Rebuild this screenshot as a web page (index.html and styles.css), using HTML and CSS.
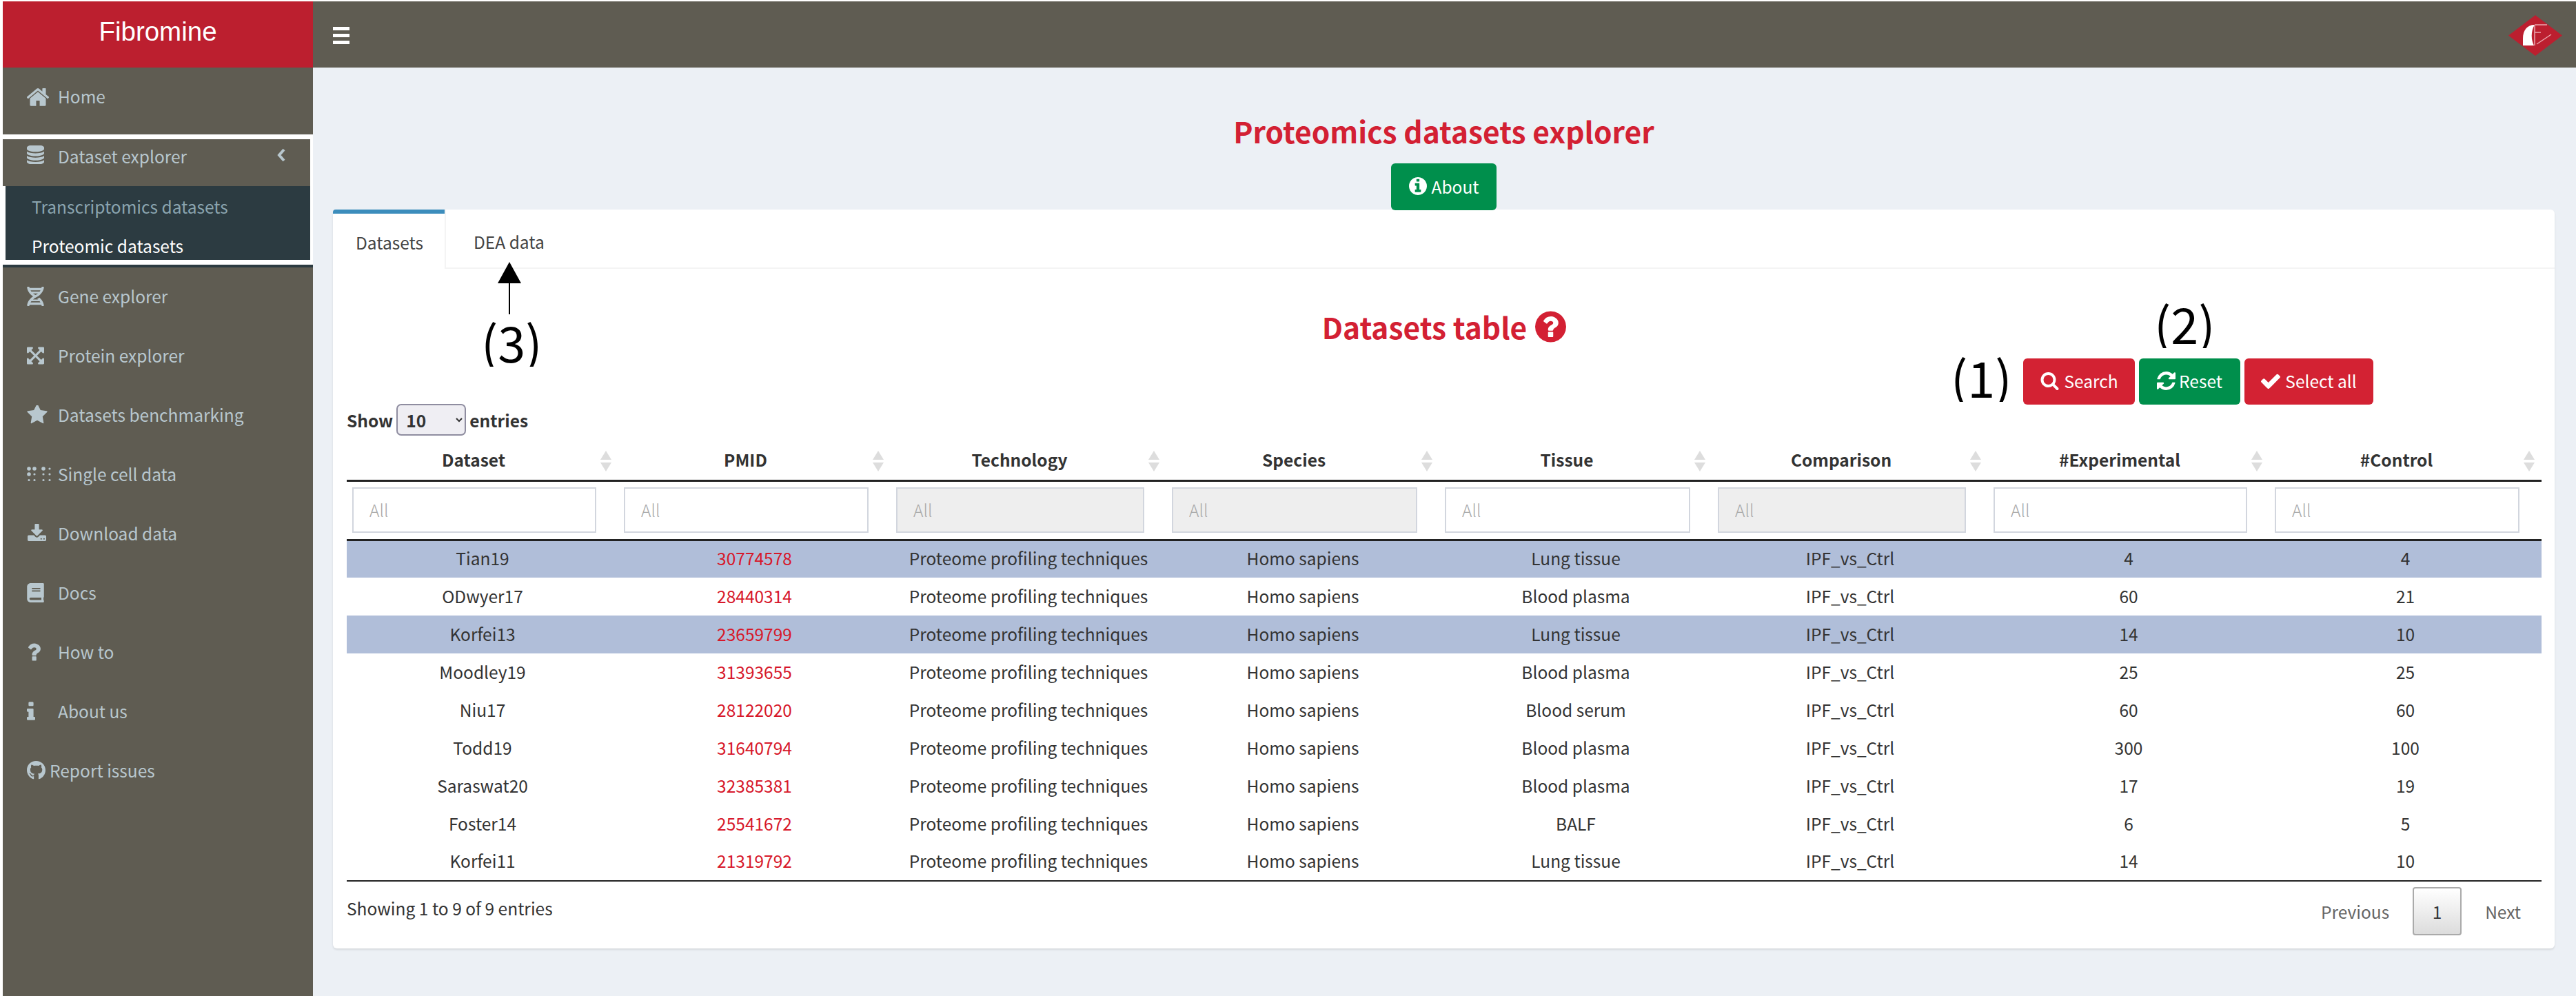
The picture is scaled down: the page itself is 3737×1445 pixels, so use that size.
FILE: index.html
```html
<!DOCTYPE html>
<html lang="en">
<head>
<meta charset="utf-8">
<title>Fibromine</title>
<link rel="stylesheet" href="styles.css">
</head>
<body>
<svg class="sprite" xmlns="http://www.w3.org/2000/svg">
<symbol id="i-home" viewBox="100 150 1592 1400"><path d="M1472 992v480q0 26-19 45t-45 19h-384v-384h-256v384h-384q-26 0-45-19t-19-45v-480q0-1 .5-3t.5-3l575-474 575 474q1 2 1 6zm223-69l-62 74q-8 9-21 11h-3q-13 0-21-7l-692-577-692 577q-12 8-24 7-13-2-21-11l-62-74q-8-10-7-23.500t11-21.500l719-599q32-26 76-26t76 26l244 204v-195q0-14 9-23t23-9h192q14 0 23 9t9 23v408l219 182q10 8 11 21.500t-7 23.500z"/></symbol>
<symbol id="i-db" viewBox="128 128 1536 1536"><path d="M896 768q237 0 443-43t325-127v170q0 69-103 128t-280 93.500-385 34.500-385-34.500-280-93.500-103-128v-170q119 84 325 127t443 43zm0 768q237 0 443-43t325-127v170q0 69-103 128t-280 93.500-385 34.500-385-34.500-280-93.500-103-128v-170q119 84 325 127t443 43zm0-384q237 0 443-43t325-127v170q0 69-103 128t-280 93.500-385 34.500-385-34.500-280-93.500-103-128v-170q119 84 325 127t443 43zm0-1152q208 0 385 34.500t280 93.500 103 128v128q0 69-103 128t-280 93.500-385 34.500-385-34.500-280-93.500-103-128v-128q0-69 103-128t280-93.500 385-34.500z"/></symbol>
<symbol id="i-dna" viewBox="0 0 448 512"><path d="M.1 494.100c-1.100 9.500 6.300 17.800 15.900 17.800l32.300.1c8.100 0 14.900-5.900 16-13.900.7-4.900 1.800-11.100 3.400-18.100H380c1.600 6.900 2.900 13.200 3.500 18.100 1.100 8 7.900 14 16 13.900l32.300-.1c9.600 0 17.100-8.300 15.900-17.800-4.600-37.900-25.600-129-118.900-207.700-17.600 12.400-37.100 24.200-58.500 35.400 6.200 4.600 11.400 9.400 17 14.200H159.700c21.300-18.100 47-35.600 78.700-51.400C410.500 199.100 442.100 65.800 447.900 17.900 449 8.400 441.600.1 432 .1L399.600 0c-8.100 0-14.900 5.900-16 13.900-.7 4.900-1.800 11.100-3.400 18.100H67.800c-1.600-7-2.700-13.100-3.400-18.100-1.100-8-7.900-14-16-13.900L16.100.1C6.500.1-1 8.400.1 17.900 5.300 60.800 31.400 171.800 160 256 31.500 340.200 5.300 451.200.1 494.100zM224 219.600c-25.100-13.700-46.400-28.400-64.300-43.600h128.500c-17.800 15.200-39.100 30-64.200 43.600zM355.100 96c-5.800 10.400-12.800 21.100-21 32H114c-8.300-10.900-15.200-21.600-21-32h262.100zM92.900 416c5.800-10.400 12.800-21.100 21-32h219.400c8.300 10.900 15.400 21.600 21.200 32H92.900z"/></symbol>
<symbol id="i-expand" viewBox="0 32 448 448"><path d="M448.100 344v112c0 13.300-10.700 24-24 24h-112c-21.400 0-32.100-25.900-17-41l36.200-36.200L224 295.600 116.800 402.900 153 439c15.100 15.100 4.400 41-17 41H24c-13.300 0-24-10.700-24-24V344c0-21.400 25.900-32.100 41-17l36.200 36.200L184.500 256 77.200 148.700 41 185c-15.100 15.100-41 4.400-41-17V56c0-13.300 10.700-24 24-24h112c21.400 0 32.100 25.900 17 41l-36.200 36.200L224 216.400l107.300-107.300L295.100 73c-15.100-15.100-4.400-41 17-41h112c13.300 0 24 10.700 24 24v112c0 21.400-25.900 32.100-41 17l-36.200-36.200L263.600 256l107.300 107.300 36.200-36.200c15.100-15.200 41-4.500 41 16.900z"/></symbol>
<symbol id="i-star" viewBox="64 128 1664 1536"><path d="M1728 647q0 22-26 48l-363 354 86 500q1 7 1 20 0 21-10.500 35.500t-30.500 14.500q-19 0-40-12l-449-236-449 236q-22 12-40 12-21 0-31.500-14.500t-10.500-35.500q0-6 2-20l86-500-364-354q-25-27-25-48 0-37 56-46l502-73 225-455q19-41 49-41t49 41l225 455 502 73q56 9 56 46z"/></symbol>
<symbol id="i-braille" viewBox="0 0 36 22"><circle cx="3" cy="3" r="2.800"/><circle cx="11" cy="3" r="2.800"/><circle cx="24" cy="3" r="2.800"/><circle cx="33" cy="3" r="1.600"/><circle cx="3" cy="11" r="2.800"/><circle cx="11" cy="11" r="1.600"/><circle cx="24" cy="11" r="1.600"/><circle cx="33" cy="11" r="1.600"/><circle cx="3" cy="19.500" r="1.600"/><circle cx="11" cy="19.500" r="1.600"/><circle cx="24" cy="19.500" r="1.600"/><circle cx="33" cy="19.500" r="1.600"/></symbol>
<symbol id="i-download" viewBox="0 128 1728 1408"><path d="M1344 1344q0-26-19-45t-45-19-45 19-19 45 19 45 45 19 45-19 19-45zm256 0q0-26-19-45t-45-19-45 19-19 45 19 45 45 19 45-19 19-45zm128-224v320q0 40-28 68t-68 28h-1472q-40 0-68-28t-28-68v-320q0-40 28-68t68-28h465l135 136q58 56 136 56t136-56l136-136h464q40 0 68 28t28 68zm-325-569q17 41-14 70l-448 448q-18 19-45 19t-45-19l-448-448q-31-29-14-70 17-39 59-39h256v-448q0-26 19-45t45-19h256q26 0 45 19t19 45v448h256q42 0 59 39z"/></symbol>
<symbol id="i-book" viewBox="0 0 448 512"><path d="M448 360V24c0-13.300-10.700-24-24-24H96C43 0 0 43 0 96v320c0 53 43 96 96 96h328c13.300 0 24-10.700 24-24v-16c0-7.500-3.500-14.300-8.900-18.700-4.200-15.400-4.200-59.300 0-74.700 5.400-4.300 8.900-11.100 8.900-18.600zM128 134c0-3.300 2.700-6 6-6h212c3.300 0 6 2.700 6 6v20c0 3.300-2.700 6-6 6H134c-3.300 0-6-2.700-6-6v-20zm0 64c0-3.300 2.700-6 6-6h212c3.300 0 6 2.700 6 6v20c0 3.300-2.700 6-6 6H134c-3.300 0-6-2.700-6-6v-20zm253.400 250H96c-17.700 0-32-14.300-32-32 0-17.600 14.400-32 32-32h285.400c-1.900 17.100-1.900 46.900 0 64z"/></symbol>
<symbol id="i-question" viewBox="380 256 1030 1280"><path d="M1088 1256v240q0 16-12 28t-28 12h-240q-16 0-28-12t-12-28v-240q0-16 12-28t28-12h240q16 0 28 12t12 28zm316-600q0 54-15.500 101t-35 76.500-55 59.500-57.500 43.500-61 35.500q-41 23-68.500 65t-27.500 67q0 17-12 32.500t-28 15.500h-240q-15 0-25.500-18.500t-10.500-37.500v-45q0-83 65-156.500t143-108.500q59-27 84-56t25-76q0-42-46.500-74t-107.500-32q-65 0-108 29-35 25-107 115-13 16-31 16-12 0-25-8l-164-125q-13-10-15.500-25t5.500-28q160-266 464-266 80 0 161 31t146 83 106 127.500 41 158.500z"/></symbol>
<symbol id="i-info" viewBox="576 128 640 1408"><path d="M1216 1344v128q0 26-19 45t-45 19h-512q-26 0-45-19t-19-45v-128q0-26 19-45t45-19h64v-384h-64q-26 0-45-19t-19-45v-128q0-26 19-45t45-19h384q26 0 45 19t19 45v576h64q26 0 45 19t19 45zm-128-1152v192q0 26-19 45t-45 19h-256q-26 0-45-19t-19-45v-192q0-26 19-45t45-19h256q26 0 45 19t19 45z"/></symbol>
<symbol id="i-github" viewBox="0 8 496 496"><path d="M165.900 397.400c0 2-2.300 3.600-5.200 3.600-3.300 0-5.600-1.600-5.600-3.600 0-2 2.300-3.600 5.200-3.600 3-.3 5.600 1.300 5.600 3.600zm-31.100-4.500c-.7 2 1.300 4.300 4.300 4.900 2.600 1 5.600 0 6.200-2s-1.300-4.300-4.300-5.200c-2.600-.7-5.500.3-6.200 2.300zm44.200-1.700c-2.900.7-4.900 2.600-4.600 4.900.3 2 2.900 3.300 5.900 2.600 2.900-.7 4.900-2.600 4.600-4.600-.3-1.900-3-3.200-5.900-2.900zM244.800 8C106.100 8 0 113.300 0 252c0 110.900 69.800 205.800 169.500 239.200 12.800 2.300 17.300-5.600 17.300-12.100 0-6.200-.3-40.400-.3-61.400 0 0-70 15-84.700-29.800 0 0-11.400-29.100-27.800-36.600 0 0-22.900-15.700 1.600-15.400 0 0 24.900 2 38.600 25.800 21.900 38.600 58.600 27.500 72.900 20.900 2.300-16 8.800-27.100 16-33.700-55.900-6.200-112.300-14.300-112.300-110.500 0-27.500 7.600-41.300 23.600-58.900-2.600-6.500-11.100-33.300 2.600-67.900 20.900-6.500 69 27 69 27 20-5.600 41.500-8.500 62.800-8.500s42.800 2.900 62.800 8.500c0 0 48.100-33.600 69-27 13.700 34.700 5.200 61.400 2.600 67.900 16 17.700 25.800 31.500 25.800 58.900 0 96.500-58.900 104.200-114.800 110.500 9.200 7.900 17 22.900 17 46.400 0 33.700-.3 75.400-.3 83.600 0 6.500 4.600 14.400 17.300 12.100C428.200 457.800 496 362.900 496 252 496 113.300 383.500 8 244.800 8z"/></symbol>
<symbol id="i-search" viewBox="0 128 1728 1664"><path d="M1216 832q0-185-131.500-316.500t-316.500-131.500-316.500 131.500-131.500 316.500 131.500 316.500 316.500 131.500 316.500-131.500 131.500-316.500zm512 832q0 52-38 90t-90 38q-54 0-90-38l-343-342q-179 124-399 124-143 0-273.500-55.500t-225-150-150-225-55.500-273.500 55.500-273.500 150-225 225-150 273.500-55.500 273.500 55.500 225 150 150 225 55.500 273.500q0 220-124 399l343 343q37 37 37 90z"/></symbol>
<symbol id="i-refresh" viewBox="128 128 1536 1536"><path d="M1639 1056q0 5-1 7-64 268-268 434.500t-478 166.500q-146 0-282.500-55t-243.500-157l-129 129q-19 19-45 19t-45-19-19-45v-448q0-26 19-45t45-19h448q26 0 45 19t19 45-19 45l-137 137q71 66 161 102t187 36q134 0 250-65t186-179q11-17 53-117 8-23 30-23h192q13 0 22.500 9.500t9.500 22.500zm25-800v448q0 26-19 45t-45 19h-448q-26 0-45-19t-19-45 19-45l138-138q-148-137-349-137-134 0-250 65t-186 179q-11 17-53 117-8 23-30 23h-199q-13 0-22.500-9.500t-9.500-22.500v-7q65-268 270-434.500t480-166.500q146 0 284 55.500t245 156.500l130-129q19-19 45-19t45 19 19 45z"/></symbol>
<symbol id="i-check" viewBox="120 290 1551 1232"><path d="M1671 566q0 40-28 68l-724 724-136 136q-28 28-68 28t-68-28l-136-136-362-362q-28-28-28-68t28-68l136-136q28-28 68-28t68 28l294 295 656-657q28-28 68-28t68 28l136 136q28 28 28 68z"/></symbol>
<symbol id="i-info-c" viewBox="128 128 1536 1536"><path d="M1152 1376v-160q0-14-9-23t-23-9h-96v-512q0-14-9-23t-23-9h-320q-14 0-23 9t-9 23v160q0 14 9 23t23 9h96v320h-96q-14 0-23 9t-9 23v160q0 14 9 23t23 9h448q14 0 23-9t9-23zm-128-896v-160q0-14-9-23t-23-9h-192q-14 0-23 9t-9 23v160q0 14 9 23t23 9h192q14 0 23-9t9-23zm640 416q0 209-103 385.500t-279.500 279.500-385.500 103-385.500-103-279.500-279.500-103-385.500 103-385.500 279.500-279.500 385.500-103 385.500 103 279.500 279.500 103 385.500z"/></symbol>
<symbol id="i-q-c" viewBox="128 128 1536 1536"><path d="M1024 1376v-192q0-14-9-23t-23-9h-192q-14 0-23 9t-9 23v192q0 14 9 23t23 9h192q14 0 23-9t9-23zm256-672q0-88-55.500-163t-138.500-116-170-41q-243 0-371 213-15 24 8 42l132 100q7 6 19 6 16 0 25-12 53-68 86-92 34-24 86-24 48 0 85.500 26t37.500 59q0 38-20 61t-68 45q-63 28-115.500 86.500t-52.500 125.500v36q0 14 9 23t23 9h192q14 0 23-9t9-23q0-19 21.500-49.500t54.500-49.500q32-18 49-28.500t46-35 44.500-48 28-60.500 12.500-81zm384 192q0 209-103 385.500t-279.500 279.500-385.500 103-385.500-103-279.500-279.500-103-385.500 103-385.500 279.500-279.500 385.500-103 385.500 103 279.500 279.500 103 385.500z"/></symbol>
</svg>

<div class="app">
  <header class="topbar">
    <a class="brand">Fibromine</a>
    <nav class="navbar">
      <span class="burger"><i></i><i></i><i></i></span>
      <svg class="logo" viewBox="0 0 78 59"><polygon class="logo-bg" points="39,0 78,29.500 39,59 0,29.500"/><path class="logo-sail" d="M38 14 C27 14 21 22 21 34 L21 44 L37 44 C33 36 32 24 38 14Z"/><path class="logo-line" d="M38 14 V44 M38 14 H56 M38 25 H47 M41 42 L62 28"/></svg>
    </nav>
  </header>

  <div class="layout">
    <aside class="sidebar">
      <ul class="menu menu-first">
        <li class="item"><span class="ic"><svg class="ic-home"><use href="#i-home"/></svg></span>Home</li>
      </ul>
      <div class="group">
        <div class="group-head"><span class="ic"><svg class="ic-db"><use href="#i-db"/></svg></span>Dataset explorer<svg class="chev" viewBox="0 0 12 20"><path d="M10 2 L3 10 L10 18"/></svg></div>
        <ul class="submenu">
          <li class="sub">Transcriptomics datasets</li>
          <li class="sub sub-on">Proteomic datasets</li>
        </ul>
      </div>
      <div class="group-tail"></div>
      <ul class="menu">
        <li class="item"><span class="ic"><svg class="ic-dna"><use href="#i-dna"/></svg></span>Gene explorer</li>
        <li class="item"><span class="ic"><svg class="ic-dna"><use href="#i-expand"/></svg></span>Protein explorer</li>
        <li class="item"><span class="ic"><svg class="ic-star"><use href="#i-star"/></svg></span>Datasets benchmarking</li>
        <li class="item"><span class="ic"><svg class="ic-braille"><use href="#i-braille"/></svg></span>Single cell data</li>
        <li class="item"><span class="ic"><svg class="ic-dl"><use href="#i-download"/></svg></span>Download data</li>
        <li class="item"><span class="ic"><svg class="ic-dna"><use href="#i-book"/></svg></span>Docs</li>
        <li class="item"><span class="ic"><svg class="ic-q"><use href="#i-question"/></svg></span>How to</li>
        <li class="item"><span class="ic"><svg class="ic-i"><use href="#i-info"/></svg></span>About us</li>
        <li class="item item-gh"><span class="ic ic-narrow"><svg class="ic-gh"><use href="#i-github"/></svg></span>Report issues</li>
      </ul>
    </aside>

    <main class="content">
      <h2 class="page-title">Proteomics datasets explorer</h2>
      <div class="about-row"><button class="btn btn-green btn-about"><svg class="bi bi-info"><use href="#i-info-c"/></svg>About</button></div>

      <section class="box">
        <div class="tabs">
          <div class="tab tab-on">Datasets</div>
          <div class="tab">DEA data</div>
        </div>
        <div class="pane">
          <h3 class="table-title">Datasets table <svg class="help"><use href="#i-q-c"/></svg></h3>
          <div class="actions">
            <button class="btn btn-red btn-search"><svg class="bi bi-search"><use href="#i-search"/></svg>Search</button>
            <button class="btn btn-green btn-reset"><svg class="bi bi-refresh"><use href="#i-refresh"/></svg>Reset</button>
            <button class="btn btn-red btn-all"><svg class="bi bi-check"><use href="#i-check"/></svg>Select all</button>
          </div>
          <div class="length"><span>Show</span>
            <select class="length-select"><option>10</option><option>25</option></select>
            <span>entries</span></div>
          <table class="data">
            <colgroup><col class="w1"><col class="w2"><col class="w3"><col class="w4"><col class="w4"><col class="w3"><col class="w7"><col class="w2"></colgroup>
            <thead>
              <tr class="heads"><th>Dataset</th><th>PMID</th><th>Technology</th><th>Species</th><th>Tissue</th><th>Comparison</th><th>#Experimental</th><th>#Control</th></tr>
              <tr class="filters">
                <td><input class="flt" placeholder="All"></td>
                <td><input class="flt" placeholder="All"></td>
                <td><input class="flt" placeholder="All" disabled></td>
                <td><input class="flt" placeholder="All" disabled></td>
                <td><input class="flt" placeholder="All"></td>
                <td><input class="flt" placeholder="All" disabled></td>
                <td><input class="flt" placeholder="All"></td>
                <td><input class="flt" placeholder="All"></td>
              </tr>
            </thead>
            <tbody>
              <tr class="sel"><td>Tian19</td><td class="pm">30774578</td><td>Proteome profiling techniques</td><td>Homo sapiens</td><td>Lung tissue</td><td>IPF_vs_Ctrl</td><td>4</td><td>4</td></tr>
              <tr><td>ODwyer17</td><td class="pm">28440314</td><td>Proteome profiling techniques</td><td>Homo sapiens</td><td>Blood plasma</td><td>IPF_vs_Ctrl</td><td>60</td><td>21</td></tr>
              <tr class="sel"><td>Korfei13</td><td class="pm">23659799</td><td>Proteome profiling techniques</td><td>Homo sapiens</td><td>Lung tissue</td><td>IPF_vs_Ctrl</td><td>14</td><td>10</td></tr>
              <tr><td>Moodley19</td><td class="pm">31393655</td><td>Proteome profiling techniques</td><td>Homo sapiens</td><td>Blood plasma</td><td>IPF_vs_Ctrl</td><td>25</td><td>25</td></tr>
              <tr><td>Niu17</td><td class="pm">28122020</td><td>Proteome profiling techniques</td><td>Homo sapiens</td><td>Blood serum</td><td>IPF_vs_Ctrl</td><td>60</td><td>60</td></tr>
              <tr><td>Todd19</td><td class="pm">31640794</td><td>Proteome profiling techniques</td><td>Homo sapiens</td><td>Blood plasma</td><td>IPF_vs_Ctrl</td><td>300</td><td>100</td></tr>
              <tr><td>Saraswat20</td><td class="pm">32385381</td><td>Proteome profiling techniques</td><td>Homo sapiens</td><td>Blood plasma</td><td>IPF_vs_Ctrl</td><td>17</td><td>19</td></tr>
              <tr><td>Foster14</td><td class="pm">25541672</td><td>Proteome profiling techniques</td><td>Homo sapiens</td><td>BALF</td><td>IPF_vs_Ctrl</td><td>6</td><td>5</td></tr>
              <tr><td>Korfei11</td><td class="pm">21319792</td><td>Proteome profiling techniques</td><td>Homo sapiens</td><td>Lung tissue</td><td>IPF_vs_Ctrl</td><td>14</td><td>10</td></tr>
            </tbody>
          </table>
          <div class="foot">
            <div class="info">Showing 1 to 9 of 9 entries</div>
            <div class="pager"><span class="pg">Previous</span><span class="pg-cur">1</span><span class="pg">Next</span></div>
          </div>
        </div>
      </section>
    </main>
  </div>

  <div class="note note-1">(1)</div>
  <div class="note note-2">(2)</div>
  <div class="note note-3">(3)</div>
  <svg class="arrow" viewBox="0 0 36 76"><path d="M18 0 L35 31 L19 31 L19 76 L17 76 L17 31 L1 31 Z"/></svg>
</div>
</body>
</html>
```

FILE: styles.css
```css
* { box-sizing: border-box; }
html, body { margin: 0; padding: 0; }
body {
  width: 3737px;
  height: 1445px;
  overflow: hidden;
  background: #fff;
  font-family: "Noto Sans CJK SC", "Noto Sans", sans-serif;
  font-size: 24.5px;
  color: #333;
}
.sprite { display: none; }
.app {
  position: relative;
  width: 3737px;
  height: 1445px;
  padding: 2px 0 0 4px;
  display: flex;
  flex-direction: column;
  background: #fff;
}
.topbar { display: flex; height: 96px; flex: none; }
.brand {
  width: 450px;
  background: #bc1f2f;
  color: #fff;
  font-family: "Liberation Sans", Arial, sans-serif;
  font-size: 38.5px;
  line-height: 88px;
  text-align: center;
}
.navbar {
  flex: 1;
  background: #5f5c52;
  display: flex;
  align-items: center;
  justify-content: space-between;
  padding: 0 20px 0 29px;
}
.burger { display: flex; flex-direction: column; gap: 5px; margin-top: 2px; }
.burger i { display: block; width: 24px; height: 5px; background: #fff; }
.logo { width: 78px; height: 59px; margin-top: 2px; }
.logo-bg { fill: #bc1f2f; }
.logo-sail { fill: #fff; }
.logo-line { fill: none; stroke: #eaa8af; stroke-width: 1.500; }

.layout { flex: 1; display: flex; min-height: 0; background: #ecf0f5; }
.sidebar { width: 450px; flex: none; background: #5f5c52; color: #b8c7ce; }
.menu { list-style: none; margin: 0; padding: 0; }
.menu-first { padding-bottom: 11px; }
.item { height: 86px; display: flex; align-items: center; padding-bottom: 3px; }
.ic { width: 80px; padding-left: 35px; flex: none; display: flex; align-items: center; height: 40px; }
.ic svg { fill: #b8c7ce; display: block; }
.ic-narrow { width: 68px; }
.ic-home { width: 32px; height: 28px; }
.ic-db { width: 25px; height: 27px; margin-top: -4px; }
.ic-dna { width: 25px; height: 28px; }
.ic-star { width: 30px; height: 27px; }
.ic-braille { width: 36px; height: 22px; }
.ic-dl { width: 28px; height: 27px; }
.ic-q { width: 20px; height: 26px; }
.ic-i { width: 12px; height: 27px; }
.ic-gh { width: 27px; height: 27px; }

.group { border: solid #fff; border-width: 7px 4px; }
.group-head {
  height: 68px;
  padding: 0 0 20px 0;
  display: flex;
  align-items: center;
  margin-left: -4px;
  position: relative;
  background: #5f5c52;
}
.group-head .ic { padding-left: 35px; }
.chev { position: absolute; left: 398px; top: 13px; width: 12px; height: 20px; fill: none; stroke: #b8c7ce; stroke-width: 4; }
.submenu { list-style: none; margin: 0; padding: 0; height: 107px; overflow: hidden; background: #2c3b41; }
.sub { height: 59px; line-height: 59px; padding-left: 38px; color: #8aa4af; }
.sub-on { color: #fff; line-height: 56px; }
.group-tail { height: 4px; background: #2c3b41; }

.content { flex: 1; padding: 0 31px 0 29px; min-width: 0; }
.page-title {
  margin: 0;
  padding-top: 64px;
  height: 139px;
  line-height: 56px;
  text-align: center;
  color: #d32033;
  font-size: 42.5px;
  font-weight: 700;
  white-space: nowrap;
}
.about-row { display: flex; justify-content: center; margin-bottom: -1px; position: relative; z-index: 1; }
.btn {
  display: inline-flex;
  align-items: center;
  justify-content: center;
  border: 0;
  border-radius: 6px;
  color: #fff;
  font: inherit;
  font-size: 24.5px;
  padding: 0 0 2px;
}
.btn-green { background: #008f4c; }
.btn-red { background: #d32233; }
.btn-about { width: 153px; height: 68px; }
.bi { fill: #fff; flex: none; }
.bi-info { width: 26px; height: 26px; margin-right: 7px; }
.bi-search { width: 28px; height: 26px; margin-right: 7px; }
.bi-refresh { width: 27px; height: 27px; margin-right: 5px; }
.bi-check { width: 28px; height: 24px; margin-right: 7px; }

.box {
  background: #fff;
  border-radius: 6px;
  box-shadow: 0 2px 3px rgba(0, 0, 0, .1);
  height: 1072px;
}
.tabs { display: flex; height: 86px; border-bottom: 2px solid #f4f4f4; }
.tab { padding: 0 40px; line-height: 94px; color: #444; border-left: 2px solid #f4f4f4; border-bottom: 2px solid #f4f4f4; height: 86px; }
.tab-on {
  width: 162px;
  padding: 0 0 0 33px;
  border-left: 0;
  border-top: 6px solid #3c8dbc;
  border-bottom: 2px solid #fff;
  line-height: 84px;
  border-top-left-radius: 4px;
  color: #444;
}
.pane { padding: 54px 19px 0 20px; }
.table-title {
  margin: 0;
  height: 60px;
  display: flex;
  align-items: center;
  justify-content: center;
  gap: 12px;
  color: #d32033;
  font-size: 42.5px;
  font-weight: 700;
  line-height: 60px;
}
.help { width: 45px; height: 46px; fill: #d32033; }
.actions { display: flex; justify-content: flex-end; gap: 6px; padding-right: 244px; margin-top: 16px; }
.actions .btn { height: 67px; }
.btn-search { width: 162px; }
.btn-reset { width: 147px; }
.btn-all { width: 187px; }
.length { display: flex; align-items: center; gap: 5px; height: 46px; font-weight: 700; margin-top: 0; padding-bottom: 2px; }
.length-select {
  width: 101px;
  height: 46px;
  font: inherit;
  font-size: 24.5px;
  color: #333;
  padding: 0 0 0 8px;
  border: 2px solid #8f8da0;
  border-radius: 7px;
  background: #efeef3;
}
.data { width: 3184px; table-layout: fixed; border-collapse: collapse; margin-top: 0; }
.w1 { width: 394px; }
.w2 { width: 395px; }
.w3 { width: 400px; }
.w4 { width: 396px; }
.w7 { width: 408px; }
.heads th {
  position: relative;
  height: 64px;
  padding: 5px 34px 0 8px;
  text-align: center;
  font-weight: 700;
  color: #333;
  border-bottom: 3px solid #222;
}
.heads th::before, .heads th::after {
  content: "";
  position: absolute;
  right: 10px;
  border-left: 8px solid transparent;
  border-right: 8px solid transparent;
}
.heads th::before { top: 21px; border-bottom: 13px solid #ddd; }
.heads th::after { top: 38px; border-top: 13px solid #ddd; }
.filters td { height: 83px; padding: 8px 32px 9px 8px; border-bottom: 3px solid #222; }
.flt {
  display: block;
  width: 100%;
  height: 66px;
  padding: 0 0 0 23px;
  border: 2px solid #d2d6de;
  background: #fff;
  font: inherit;
  font-size: 24.5px;
  color: #555;
}
.flt::placeholder { color: #aaa; font-weight: 300; }
.flt:disabled { background: #eee; }
tbody td { height: 55px; padding: 0 0 3px; text-align: center; color: #333; }
tbody tr:last-child td { border-bottom: 2px solid #222; }
.sel td { background: #b0bed9; }
tbody .pm { color: #d7182a; }
.foot { display: flex; justify-content: space-between; align-items: flex-start; padding-top: 8px; }
.info { color: #333; line-height: 62px; }
.pager { display: flex; align-items: center; padding-right: 30px; color: #666; }
.pg { color: #666; }
.pg-cur {
  width: 71px;
  height: 70px;
  margin: 0 34px;
  display: flex;
  align-items: center;
  justify-content: center;
  color: #333;
  border: 2px solid #aaa;
  border-radius: 4px;
  background: linear-gradient(#fff, #dcdcdc);
}

.note {
  position: absolute;
  width: 84px;
  height: 68px;
  clip-path: inset(0 -6px);
  font-size: 72px;
  line-height: 62px;
  color: #000;
  text-align: center;
  white-space: nowrap;
}
.note-1 { left: 2830px; top: 515px; }
.note-2 { left: 3125px; top: 437px; }
.note-3 { left: 698px; top: 464px; }
.arrow { position: absolute; left: 721px; top: 380px; width: 36px; height: 76px; fill: #000; }
```
